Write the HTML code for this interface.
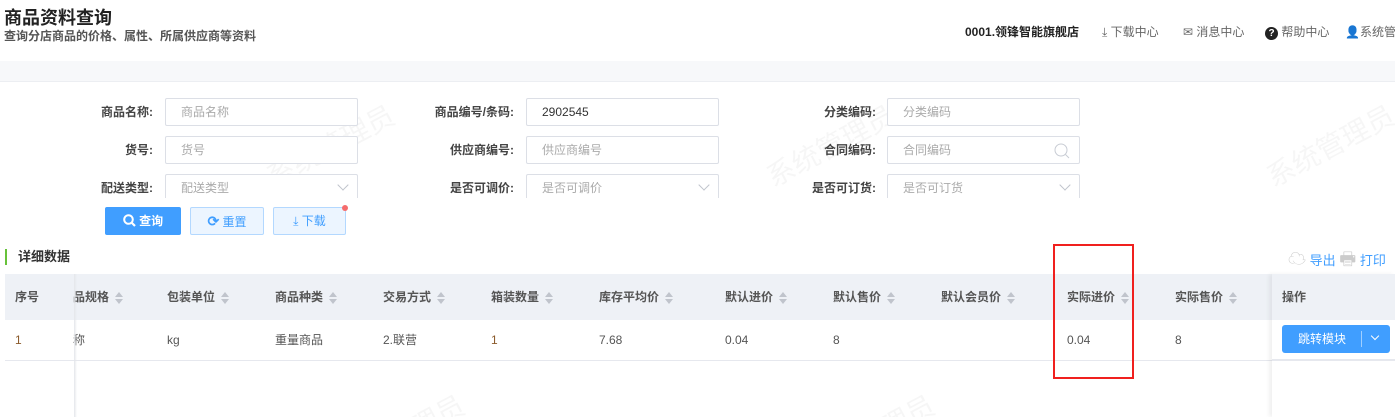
<!DOCTYPE html>
<html><head><meta charset="utf-8"><style>
*{margin:0;padding:0;box-sizing:border-box}
html,body{width:1395px;height:417px;overflow:hidden}
body{background:#fff;font-family:"Liberation Sans","Noto Sans CJK SC",sans-serif;color:#333;position:relative;font-size:12px}
.a{position:absolute;white-space:nowrap}
.lbl{position:absolute;font-size:12px;font-weight:bold;color:#444;text-align:right;width:120px;line-height:28px}
.inp{position:absolute;width:193px;height:28px;border:1px solid #dcdfe6;border-radius:2px;padding-left:15px;line-height:26px;color:#aaa;font-size:12px;background:#fff}
.chev{position:absolute;right:10px;top:6px;width:8px;height:8px;border-right:1px solid #c0c4cc;border-bottom:1px solid #c0c4cc;transform:rotate(45deg)}
.th{position:absolute;top:274px;line-height:46px;font-size:12px;color:#555;font-weight:bold}
.s{display:inline-block;width:8px;height:12px;vertical-align:middle;margin-left:6px;position:relative}
.s:before{content:"";position:absolute;left:0;top:0;border:4px solid transparent;border-bottom:5px solid #c0c4cc;border-top:0}
.s:after{content:"";position:absolute;left:0;top:7px;border:4px solid transparent;border-top:5px solid #c0c4cc;border-bottom:0}
.td{position:absolute;top:320px;line-height:40px;font-size:12px;color:#555}
.wm{position:absolute;font-size:28px;color:rgba(0,0,0,0.035);transform:rotate(-28deg);white-space:nowrap}
</style></head><body>
<div class="a" style="left:4px;top:4px;font-size:18px;font-weight:bold;color:#222">商品资料查询</div>
<div class="a" style="left:4px;top:27px;font-size:12px;font-weight:bold;color:#555">查询分店商品的价格、属性、所属供应商等资料</div>
<div class="a" style="left:965px;top:23px;font-size:12px;font-weight:bold;color:#222">0001.领锋智能旗舰店</div>
<div class="a" style="left:1102px;top:23px;font-size:12px;color:#666">⤓ 下载中心</div>
<div class="a" style="left:1183px;top:23px;font-size:12px;color:#666">✉ 消息中心</div>
<div class="a" style="left:1265px;top:23px;font-size:12px;color:#666"><span style="display:inline-block;width:13px;height:13px;border-radius:50%;background:#222;color:#fff;font-size:10px;text-align:center;line-height:13px;font-weight:bold">?</span> 帮助中心</div>
<div class="a" style="left:1345px;top:23px;font-size:12px;color:#666">👤系统管理员</div>
<div class="a" style="left:0;top:61px;width:1395px;height:21px;background:#f7f8fa;border-bottom:1px solid #eceef2"></div>
<div class="wm" style="left:260px;top:125px">系统管理员</div>
<div class="wm" style="left:760px;top:125px">系统管理员</div>
<div class="wm" style="left:1260px;top:125px">系统管理员</div>
<div class="wm" style="left:330px;top:415px">系统管理员</div>
<div class="wm" style="left:800px;top:415px">系统管理员</div>

<div style="position:absolute;left:0;top:90px;width:1395px;height:108px;overflow:hidden">
<div class="lbl" style="left:33px;top:8px">商品名称:</div><div class="inp" style="left:165px;top:8px">商品名称</div>
<div class="lbl" style="left:394px;top:8px">商品编号/条码:</div><div class="inp" style="left:526px;top:8px;color:#333">2902545</div>
<div class="lbl" style="left:756px;top:8px">分类编码:</div><div class="inp" style="left:887px;top:8px">分类编码</div>
<div class="lbl" style="left:33px;top:46px">货号:</div><div class="inp" style="left:165px;top:46px">货号</div>
<div class="lbl" style="left:394px;top:46px">供应商编号:</div><div class="inp" style="left:526px;top:46px">供应商编号</div>
<div class="lbl" style="left:756px;top:46px">合同编码:</div><div class="inp" style="left:887px;top:46px">合同编码<svg style="position:absolute;right:9px;top:6px" width="16" height="16" viewBox="0 0 16 16"><circle cx="7" cy="7" r="6" fill="none" stroke="#c8ccd4" stroke-width="1"/><path d="M11.5 11.5L15 15" stroke="#c8ccd4"/></svg></div>
<div class="lbl" style="left:33px;top:84px">配送类型:</div><div class="inp" style="left:165px;top:84px">配送类型<i class="chev"></i></div>
<div class="lbl" style="left:394px;top:84px">是否可调价:</div><div class="inp" style="left:526px;top:84px">是否可调价<i class="chev"></i></div>
<div class="lbl" style="left:756px;top:84px">是否可订货:</div><div class="inp" style="left:887px;top:84px">是否可订货<i class="chev"></i></div>
</div>

<div class="a" style="left:105px;top:207px;width:76px;height:28px;background:#409eff;border-radius:2px;color:#fff;font-size:12px;line-height:28px;text-align:center;font-weight:bold"><svg width="13" height="13" viewBox="0 0 13 13" style="vertical-align:-2px"><circle cx="5.5" cy="5.5" r="4.3" fill="none" stroke="#fff" stroke-width="2"/><path d="M8.5 8.5L12 12" stroke="#fff" stroke-width="2.2"/></svg> 查询</div>
<div class="a" style="left:190px;top:207px;width:74px;height:28px;background:#ecf5ff;border:1px solid #b3d8ff;border-radius:2px;color:#409eff;font-size:12px;line-height:26px;text-align:center"><b style="font-size:14px">⟳</b> 重置</div>
<div class="a" style="left:273px;top:207px;width:73px;height:28px;background:#ecf5ff;border:1px solid #b3d8ff;border-radius:2px;color:#409eff;font-size:12px;line-height:26px;text-align:center">⤓ 下载</div>
<div class="a" style="left:342px;top:205px;width:6px;height:6px;border-radius:50%;background:#f56c6c"></div>

<div class="a" style="left:5px;top:249px;width:2px;height:16px;background:#67c23a"></div>
<div class="a" style="left:18px;top:249px;font-size:13px;font-weight:bold;color:#333;line-height:16px">详细数据</div>
<div class="a" style="left:1288px;top:249px;font-size:13px;color:#409eff;line-height:20px"><span style="color:#ccc;font-size:18px">☁</span> 导出 <span style="color:#ccc;font-size:18px">🖶</span> 打印</div>

<div class="a" style="left:5px;top:274px;width:1390px;height:46px;background:#eef1f6"></div>
<div class="a" style="left:5px;top:360px;width:1390px;height:1px;background:#e6e8ee"></div>
<div class="th" style="left:15px">序号</div>
<div class="th" style="left:73px">品规格<i class="s"></i></div>
<div class="th" style="left:167px">包装单位<i class="s"></i></div>
<div class="th" style="left:275px">商品种类<i class="s"></i></div>
<div class="th" style="left:383px">交易方式<i class="s"></i></div>
<div class="th" style="left:491px">箱装数量<i class="s"></i></div>
<div class="th" style="left:599px">库存平均价<i class="s"></i></div>
<div class="th" style="left:725px">默认进价<i class="s"></i></div>
<div class="th" style="left:833px">默认售价<i class="s"></i></div>
<div class="th" style="left:941px">默认会员价<i class="s"></i></div>
<div class="th" style="left:1067px">实际进价<i class="s"></i></div>
<div class="th" style="left:1175px">实际售价<i class="s"></i></div>
<div class="td" style="left:15px;color:#8a5a2b">1</div>
<div class="td" style="left:73px">称</div>
<div class="td" style="left:167px">kg</div>
<div class="td" style="left:275px">重量商品</div>
<div class="td" style="left:383px">2.联营</div>
<div class="td" style="left:491px;color:#8a5a2b">1</div>
<div class="td" style="left:599px">7.68</div>
<div class="td" style="left:725px">0.04</div>
<div class="td" style="left:833px">8</div>
<div class="td" style="left:1067px">0.04</div>
<div class="td" style="left:1175px">8</div>
<div class="a" style="left:74px;top:274px;width:3px;height:143px;background:linear-gradient(90deg,#e4e6ea,rgba(255,255,255,0))"></div>
<div class="a" style="left:1272px;top:274px;width:123px;height:143px;background:transparent;box-shadow:-3px 0 4px rgba(0,0,0,0.06)"></div>
<div class="a" style="left:1272px;top:274px;width:123px;height:46px;background:#eef1f6"></div>
<div class="a" style="left:1272px;top:320px;width:123px;height:40px;background:#fff;border-bottom:1px solid #e6e8ee"></div>
<div class="th" style="left:1282px">操作</div>
<div class="a" style="left:1282px;top:325px;width:108px;height:28px;background:#409eff;border-radius:3px;color:#fff;font-size:12px;line-height:28px"><span style="position:absolute;left:16px">跳转模块</span><span style="position:absolute;left:79px;top:6px;width:1px;height:16px;background:#a0cfff"></span><span style="position:absolute;left:90px;top:8px;width:6px;height:6px;border-right:1px solid #fff;border-bottom:1px solid #fff;transform:rotate(45deg)"></span></div>
<div class="a" style="left:1053px;top:244px;width:81px;height:135px;border:2px solid #f0201e"></div>
</body></html>
